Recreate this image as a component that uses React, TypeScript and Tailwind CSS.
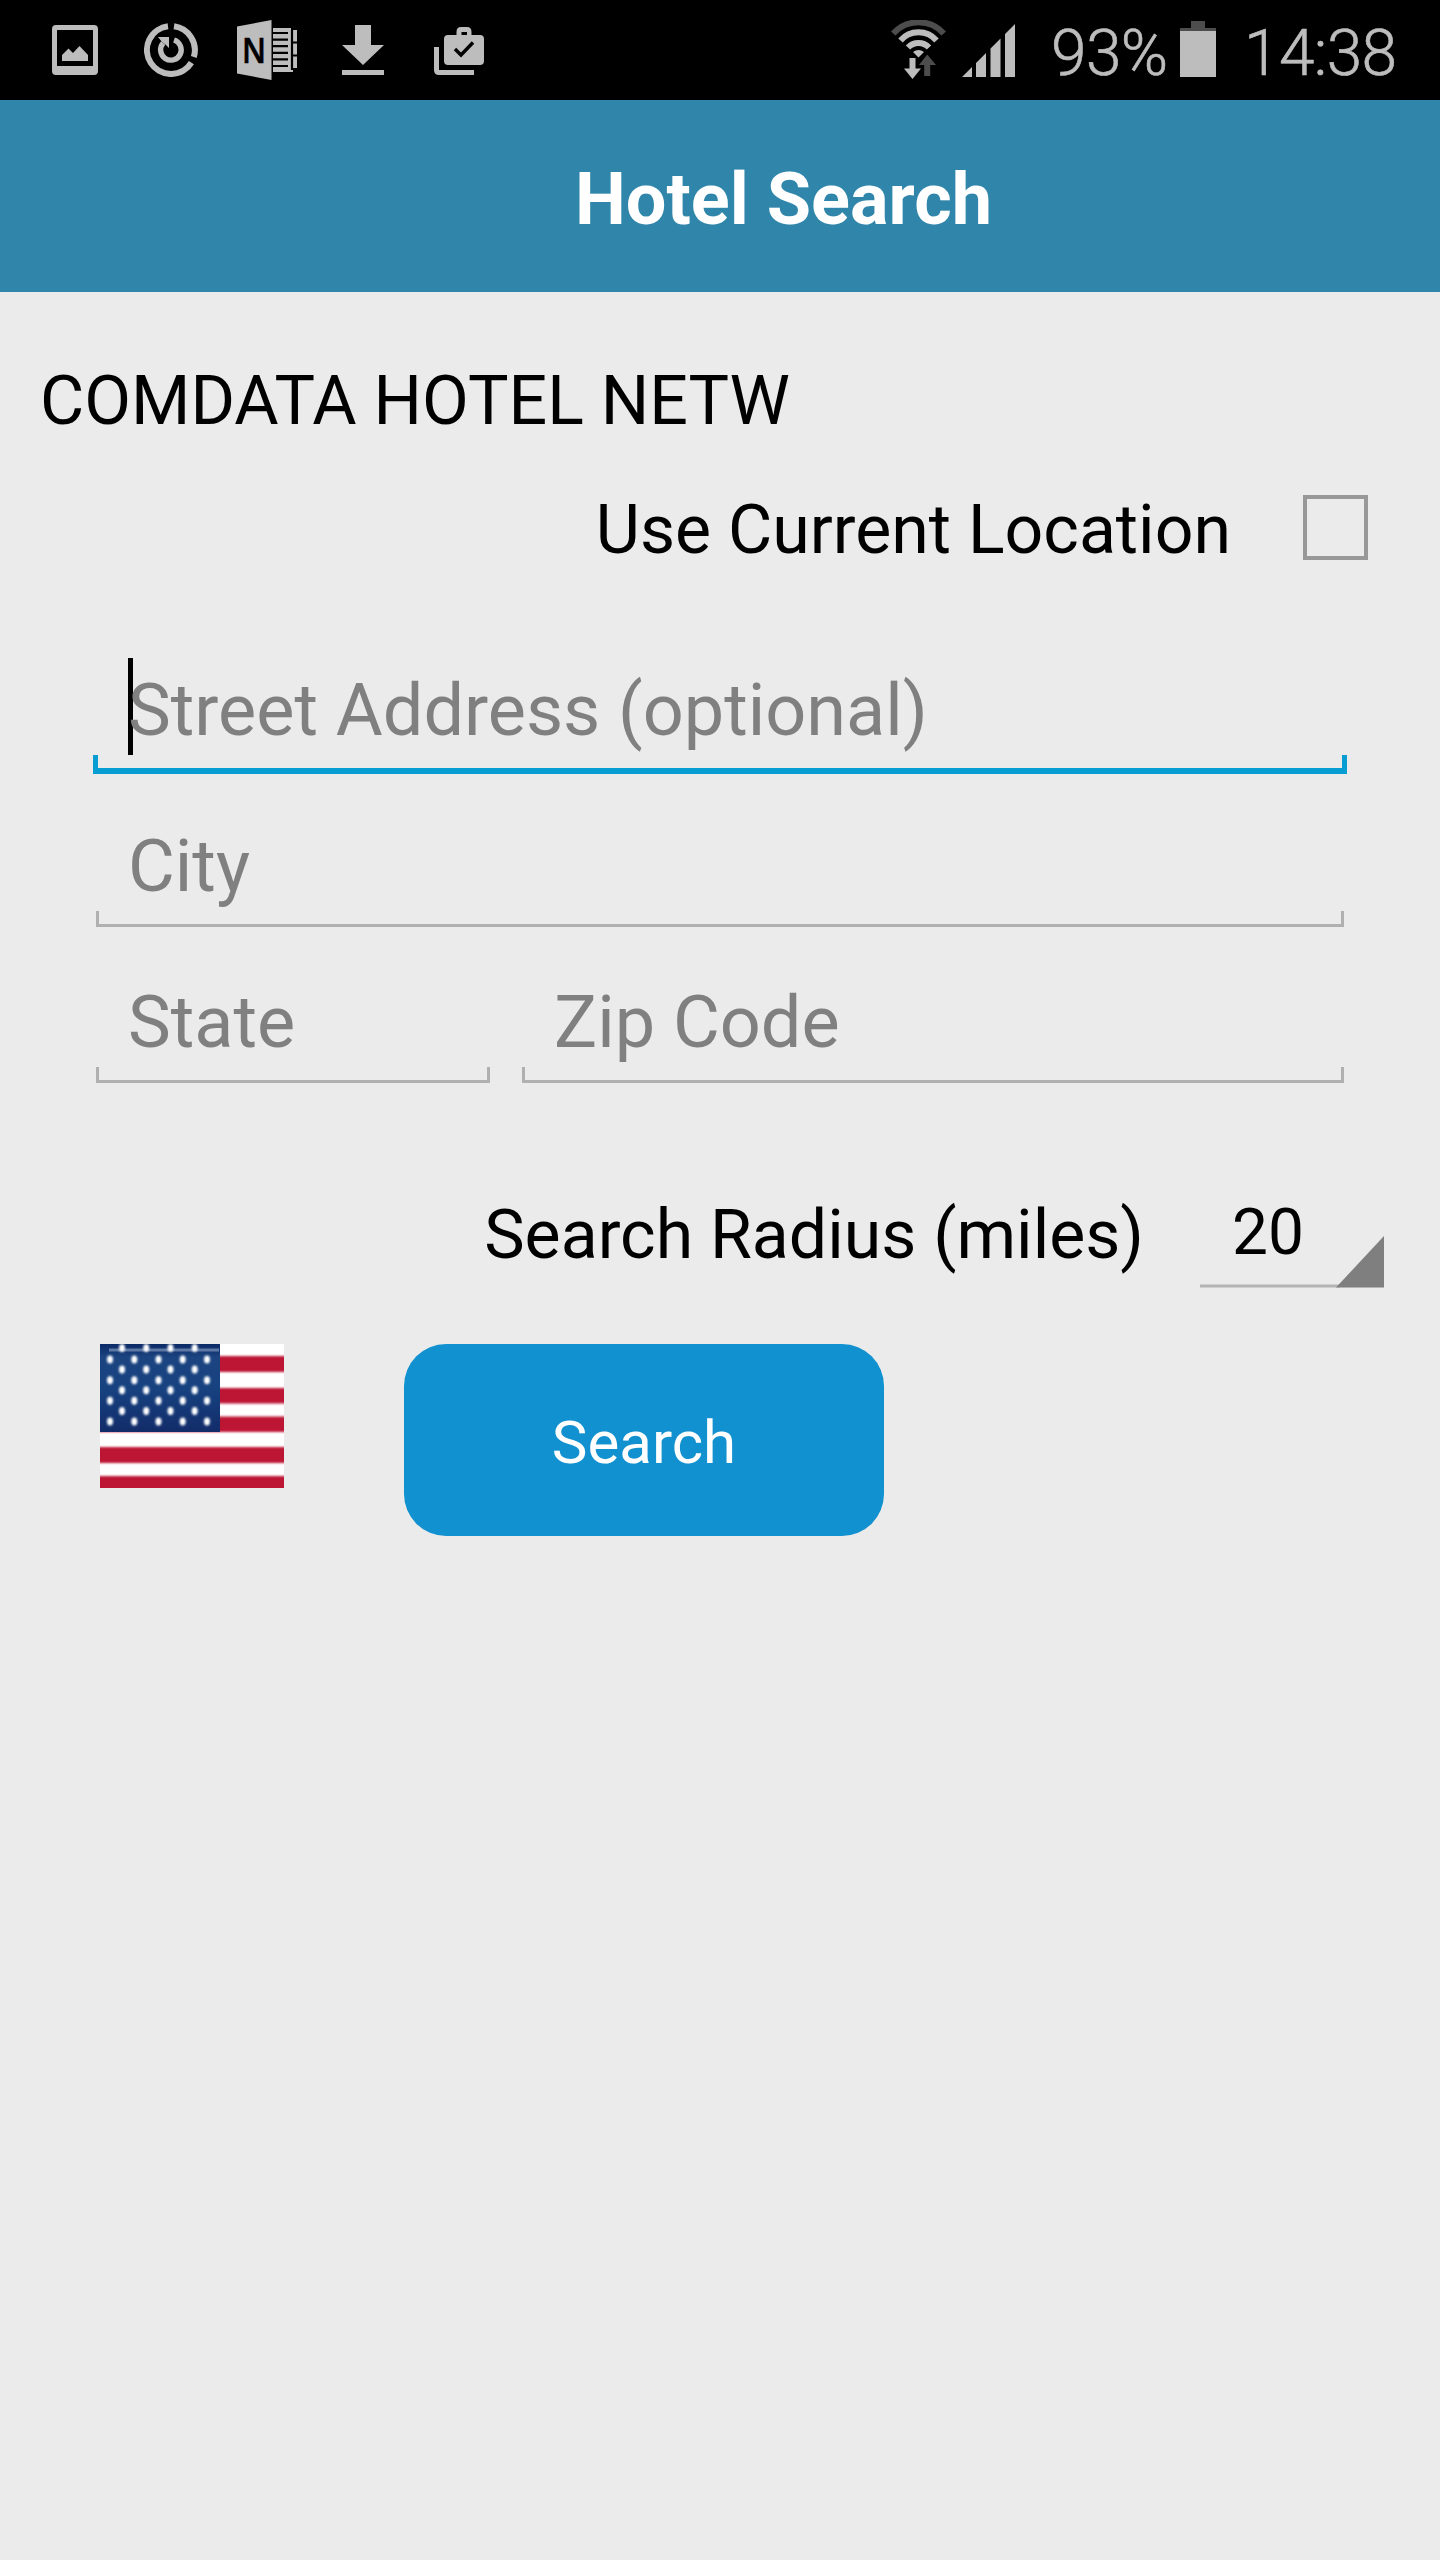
import { useState } from 'react';

const flagStripes = [
  [12, 16],
  [44, 15.5],
  [72.5, 15.5],
  [103, 16],
  [132, 20],
];

const wideStarRows = [15.5, 36.2, 56.8, 77.4];
const narrowStarRows = [4, 25.6, 46.2, 67];

function StatusBar() {
  return (
    <div className="flex h-[100px] items-start bg-black text-[#bdbdbd]">
      {/* Notifications */}
      <svg className="ml-[52px] mt-[25px] h-[50px] w-[46px]" viewBox="0 0 46 50" fill="currentColor">
        <path
          fillRule="evenodd"
          d="M4 0H42Q46 0 46 4V46Q46 50 42 50H4Q0 50 0 46V4Q0 0 4 0ZM5 5V41H41V5Z"
        />
        <path d="M10 36V30L16.5 23.5L21 28L27.5 21L36 30V36Z" />
      </svg>
      <svg className="ml-[46px] mt-[23px] h-[54px] w-[54px]" viewBox="0 0 54 54" fill="none" stroke="currentColor">
        <path strokeWidth="6" d="M30 3.2A24 24 0 0 1 49.8 34" />
        <path strokeWidth="6" d="M24 3.2A24 24 0 1 0 47.4 39.6" />
        <path strokeWidth="5.4" d="M30 17A10.3 10.3 0 1 1 19.2 20" />
        <path stroke="none" fill="currentColor" d="M14 14H25V25L21.5 21.5L18 19Z" />
      </svg>
      <svg className="ml-[39px] mt-5 h-[60px] w-[60px]" viewBox="0 0 60 60" fill="currentColor">
        <path d="M0 6.5L34.5 0V60L0 53.5Z" />
        <path d="M36 8H54V10H60V48H56V52H36Z" />
        <path
          stroke="#000"
          strokeWidth="2.2"
          d="M36 13H51M36 19.6H51M36 26.2H51M36 32.8H51M36 39.4H51M36 46H51M55 10V50M56 22.5H60M56 35.5H60"
        />
        <text
          x="17"
          y="42.5"
          fill="#000"
          stroke="#000"
          strokeWidth="0.6"
          fontSize="35"
          textLength="24"
          lengthAdjust="spacingAndGlyphs"
          textAnchor="middle"
          className="font-['Open_Sans',sans-serif] font-semibold"
        >
          N
        </text>
      </svg>
      <svg className="ml-[45px] mt-[25px] h-[50px] w-[42px]" viewBox="0 0 42 50" fill="currentColor">
        <path d="M13 0H29V20H42L21 40L0 20H13ZM0 45H42V50H0Z" />
      </svg>
      <svg className="ml-[50px] mt-[27px] h-12 w-[50px]" viewBox="0 0 50 48" fill="currentColor">
        <path d="M0 20H5V43H40V48H5Q0 48 0 43Z" />
        <path
          fillRule="evenodd"
          d="M14 8H22.5V5Q22.5 0 27 0H33Q37.5 0 37.5 5V8H46Q50 8 50 12V34Q50 38 46 38H14Q10 38 10 34V12Q10 8 14 8ZM27.5 8H33V5H27.5Z"
        />
        <path stroke="#000" strokeWidth="3.4" fill="none" d="M21 22L27 28L39 15.5" />
      </svg>

      {/* Connectivity, battery and clock */}
      <svg className="ml-[407px] mt-5 h-[60px] w-[55px]" viewBox="0 0 55 60" fill="none" stroke="currentColor">
        <path stroke="#4d4d4d" strokeWidth="6" d="M2.2 13.6A34 34 0 0 1 52.8 13.6" />
        <path strokeWidth="6" d="M9.5 20.5A24 24 0 0 1 45.5 20.5" />
        <path strokeWidth="6" d="M17 27.5A14.5 14.5 0 0 1 38 27.5" />
        <path stroke="none" fill="currentColor" d="M22 32Q27.5 28 33 32L27.5 37.5Z" />
        <path stroke="none" fill="currentColor" d="M18.5 38H24.5V48.5H30L21.5 59L13 48.5H18.5Z" />
        <path stroke="none" fill="#4d4d4d" d="M36.2 34.5L45 45H39.2V56H33.2V45H28Z" />
      </svg>
      <svg className="ml-4 mt-6 h-[53px] w-[53px]" viewBox="0 0 53 53" fill="currentColor">
        <path d="M0 53L10 43V53ZM14 39L24 29V53H14ZM28.5 24.5L38.5 14.5V53H28.5ZM43 10L53 0V53H43Z" />
      </svg>
      <span className="ml-9 mt-3.5 w-[129px] whitespace-nowrap text-[64px] leading-[80px] font-light tracking-[-0.6px] [-webkit-text-stroke:0.6px]">
        93%
      </span>
      <svg className="mt-[21px] h-14 w-9" viewBox="0 0 36 56" fill="currentColor">
        <path fill="#4d4d4d" d="M11 0H25V7H36V10H0V7H11Z" />
        <path d="M0 10H36V56H0Z" />
      </svg>
      <span className="ml-7 mt-3.5 whitespace-nowrap text-[64px] leading-[80px] font-light tracking-[-0.6px] [-webkit-text-stroke:0.6px]">
        14:38
      </span>
    </div>
  );
}

function Field({ label, className = '' }: { label: string; className?: string }) {
  return (
    <div className={`h-[156px] pt-[55px] ${className}`}>
      <div className="pl-8 text-[72px] leading-[72px] text-[#808080]">{label}</div>
      <div className="mt-2 h-4 border-x-[3px] border-b-[3px] border-[#b0b0b0]" />
    </div>
  );
}

function Flag() {
  return (
    <svg className="h-36 w-[184px]" viewBox="0 0 184 144">
      <defs>
        <linearGradient id="canton" x1="0" y1="0" x2="0" y2="1">
          <stop offset="0" stopColor="#0b2a66" />
          <stop offset="0.15" stopColor="#1b4480" />
          <stop offset="0.5" stopColor="#174280" />
          <stop offset="1" stopColor="#122c69" />
        </linearGradient>
        <filter id="soft" x="-10%" y="-10%" width="120%" height="120%">
          <feGaussianBlur stdDeviation="1.3" />
        </filter>
      </defs>
      <rect width="184" height="144" fill="#fff" />
      <g filter="url(#soft)" fill="#bd1235">
        {flagStripes.map(([y, height]) => (
          <rect key={y} x="-6" y={y} width="196" height={height} />
        ))}
      </g>
      <rect width="120" height="88" fill="url(#canton)" />
      <rect x="9" y="4.5" width="110" height="3" fill="#8fa3c4" opacity="0.6" />
      <g filter="url(#soft)" fill="#fff">
        {wideStarRows.map((y) =>
          [10, 34.3, 58.5, 82.7, 107].map((x) => <ellipse key={`${x}-${y}`} cx={x} cy={y} rx="3" ry="4" />)
        )}
        {narrowStarRows.map((y) =>
          [22, 46.2, 70.5, 94.7].map((x) => <ellipse key={`${x}-${y}`} cx={x} cy={y} rx="3" ry="4" />)
        )}
      </g>
    </svg>
  );
}

export default function App() {
  const [useLocation, setUseLocation] = useState(false);

  return (
    <div className="h-[2560px] w-[1440px] overflow-hidden bg-[#ebebeb] font-[Roboto,sans-serif] text-black">
      <StatusBar />

      <header className="flex h-48 items-center justify-center bg-[#3086aa] pl-[127px] pt-[7px]">
        <h1 className="text-[72px] leading-[80px] font-bold text-white">Hotel Search</h1>
      </header>

      <main className="pt-[69px]">
        <h2 className="pl-10 text-[68px] leading-[80px]">COMDATA HOTEL NETW</h2>

        <div className="mt-[35px] flex h-[104px] items-center justify-end pr-[72px]">
          <span className="pt-[3px] text-[68px] leading-[80px]">Use Current Location</span>
          <button
            type="button"
            role="checkbox"
            aria-checked={useLocation}
            aria-label="Use Current Location"
            onClick={() => setUseLocation(!useLocation)}
            className="mb-0.5 ml-[72px] h-[65px] w-[65px] border-4 border-[#989898]"
          />
        </div>

        {/* Address form */}
        <div className="mt-10 px-24">
          <div className="h-[156px] pt-[55px]">
            <div className="relative pl-8 text-[72px] leading-[72px] text-[#808080]">
              <span className="absolute -top-[17px] left-8 h-[97px] w-[5px] bg-black" />
              <span className="relative">Street Address (optional)</span>
            </div>
            <div className="-mx-[3px] mt-2 h-[19px] border-x-[5px] border-b-[6px] border-[#059dd2]" />
          </div>
          <Field label="City" />
          <div className="flex gap-8">
            <Field label="State" className="w-[394px]" />
            <Field label="Zip Code" className="flex-1" />
          </div>
        </div>

        <div className="mt-24 flex h-[104px] items-end justify-end pr-14">
          <span className="mb-[13px] text-[68px] leading-[80px]">Search Radius (miles)</span>
          <div className="relative ml-14 h-[104px] w-[184px] pt-[9px] pl-8 text-[64px] leading-[80px]">
            20
            <svg className="absolute bottom-0 left-0 h-[52px] w-[184px]" viewBox="0 0 184 52">
              <path d="M0 48.5H140V51.5H0Z" fill="#b4b4b4" />
              <path d="M184 0V51.5H136Z" fill="#7f7f7f" />
            </svg>
          </div>
        </div>

        <div className="mt-14 flex items-start gap-[120px] pl-[100px]">
          <Flag />
          <button
            type="button"
            className="h-48 w-[480px] rounded-[42px] bg-[#1291d0] pt-1.5 text-[60px] leading-[80px] text-white"
          >
            Search
          </button>
        </div>
      </main>
    </div>
  );
}
